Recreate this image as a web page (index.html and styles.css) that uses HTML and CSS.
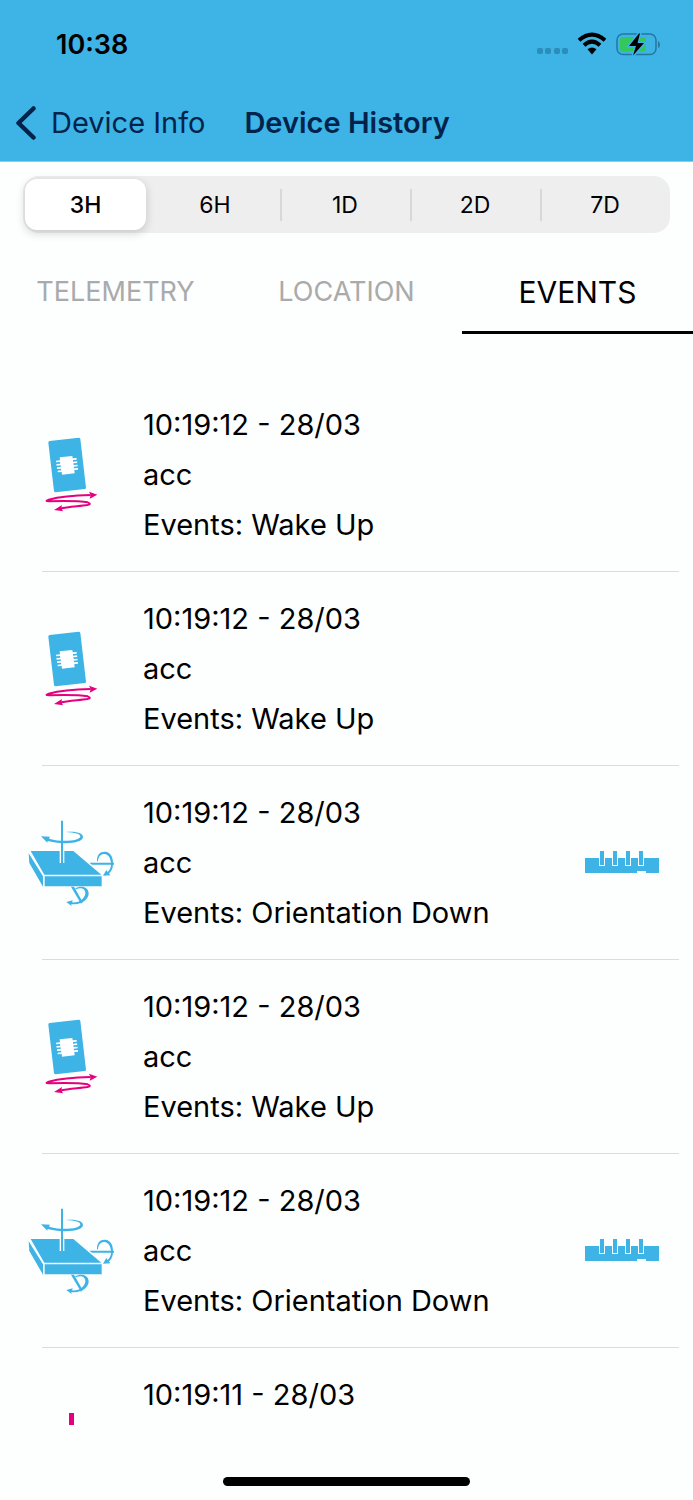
FILE: index.html
```html
<!DOCTYPE html>
<html lang="en">
<head>
<meta charset="utf-8">
<meta name="viewport" content="width=device-width, initial-scale=1">
<title>Device History</title>
<link rel="stylesheet" href="styles.css">
</head>
<body>
<svg class="sprite" aria-hidden="true">
  <symbol id="wake" viewBox="0 0 360 330">
    <g transform="translate(15 1)">
      <path d="M89 62L176 52Q180 52 181 56L198 202Q198 206 194 206L107 216Q103 216 102 212L85 67Q85 63 89 62Z" fill="#3db3e6"/>
      <path d="M119 111l38-4 1 7 12-1v5l-11 1v5l12-1 1 5-12 1 1 5 12-1v5l-12 1 1 5 12-1v5l-11 1 1 10-38 4-1-8-12 1v-5l11-1-1-5-12 1v-5l11-1v-5l-12 1-1-5 12-1-1-5-12 1v-5l12-1z" fill="#fff"/>
      <path d="M212 224C165 225 112 231 86 238Q72 243 87 243C125 242 185 243 203 246Q217 251 202 254C175 258 145 259 120 265" fill="none" stroke="#e6007e" stroke-width="6"/>
      <path d="M207 214l25 9-23 12 3-11zM126 254l-24 15 27 4-5-9z" fill="#e6007e"/>
    </g>
  </symbol>
  <symbol id="orientation" viewBox="0 0 360 330">
    <g transform="translate(0 -6)" fill="#3db3e6">
      <path d="M47 135H175L259 206H88zM41 142L84 211V242L43 171zM89 211H260V241H89z"/>
      <path d="M134 133h14v38h-14z" fill="#fff"/>
      <path d="M138 44h6v127h-6zM215 170h82v6h-66l-8-6z"/>
      <path d="M152 78C188 75 205 83 204 94C202 110 155 119 98 105l-1 5-19-19 27 1-3 6c47 13 92 4 94-6 1-9-16-12-44-14z"/>
      <path d="M246 166C245 145 257 136 270 137C288 138 295 155 294 175C293 191 287 199 282 202l4 6-22 1 10-17 4 6c7-6 11-14 10-26-1-16-8-27-20-28-10 0-18 7-19 22z"/>
      <path d="M168 242h9l26 46-5 5z"/>
      <path d="M180 248C198 237 221 243 221 263C220 280 199 298 169 294l1 6-16-12 19-5-2 6c23 2 37-11 40-26 1-15-14-20-28-13z"/>
    </g>
  </symbol>
  <symbol id="face-down" viewBox="0 0 75 24">
    <path d="M0 7H14V15H20V7H27V15H33V7H40V15H46V7H53V15H59V7H74V22H61V20H52V22H0z" fill="#3db3e6"/>
    <path d="M15 0h4v14h-4zM28 0h4v14h-4zM41 0h4v14h-4zM54 0h4v14h-4z" fill="#3db3e6"/>
  </symbol>
  <symbol id="mark" viewBox="0 0 120 110">
    <path d="M54 24h5v20h-5z" fill="#e6007e"/>
  </symbol>
</svg>
<div class="screen">
  <header class="header">
    <div class="status">
      <time class="clock">10:38</time>
      <svg class="status-icons" width="126" height="30" viewBox="0 0 126 30" aria-hidden="true">
        <g fill="#2b8db9"><rect x="1" y="14" width="6" height="6" rx="2"/><rect x="9" y="14" width="6" height="6" rx="2"/><rect x="18" y="14" width="6" height="6" rx="2"/><rect x="26" y="14" width="6" height="6" rx="2"/></g>
        <g fill="none" stroke="#000" stroke-width="4"><path d="M43 6.300Q56 -5 69 6.300"/><path d="M48 11.300Q56 4 64 11.300"/></g>
        <path d="M51.500 15.300Q56 11.500 60.500 15.300L56 20.500Z"/>
        <rect x="81" y="0" width="39" height="20.500" rx="6" fill="none" stroke="#2478a0" stroke-width="1.500"/>
        <rect x="84" y="3" width="26" height="14.500" rx="3" fill="#34c759"/>
        <path d="M122 7q2 1 2 3.500t-2 3.500z" fill="#2478a0"/>
        <path d="M103-.5L93 12H100L97 21.500L108 9H101.500L104-.5Z" stroke="#3db3e6" stroke-width="3" paint-order="stroke"/>
      </svg>
    </div>
    <nav class="navbar">
      <a class="back" href="#">
        <svg width="22" height="34" viewBox="0 0 22 34" aria-hidden="true"><path d="M18.500 2.500L3.500 17L18.500 31.500" fill="none" stroke="#03234b" stroke-width="4.500" stroke-linecap="round" stroke-linejoin="round"/></svg>
        <span>Device Info</span>
      </a>
      <h1 class="title">Device History</h1>
    </nav>
  </header>
  <div class="ranges">
    <button class="range selected" type="button">3H</button>
    <button class="range" type="button">6H</button>
    <button class="range divided" type="button">1D</button>
    <button class="range divided" type="button">2D</button>
    <button class="range divided" type="button">7D</button>
  </div>
  <div class="tabs" role="tablist">
    <button class="tab" type="button" role="tab" aria-selected="false">TELEMETRY</button>
    <button class="tab" type="button" role="tab" aria-selected="false">LOCATION</button>
    <button class="tab active" type="button" role="tab" aria-selected="true">EVENTS</button>
  </div>
  <ul class="events">
    <li class="event">
      <svg class="kind"><use href="#wake"/></svg>
      <div class="details"><p>10:19:12 - 28/03</p><p>acc</p><p>Events: Wake Up</p></div>
    </li>
    <li class="event">
      <svg class="kind"><use href="#wake"/></svg>
      <div class="details"><p>10:19:12 - 28/03</p><p>acc</p><p>Events: Wake Up</p></div>
    </li>
    <li class="event">
      <svg class="kind"><use href="#orientation"/></svg>
      <div class="details"><p>10:19:12 - 28/03</p><p>acc</p><p>Events: Orientation Down</p></div>
      <svg class="pose"><use href="#face-down"/></svg>
    </li>
    <li class="event">
      <svg class="kind"><use href="#wake"/></svg>
      <div class="details"><p>10:19:12 - 28/03</p><p>acc</p><p>Events: Wake Up</p></div>
    </li>
    <li class="event">
      <svg class="kind"><use href="#orientation"/></svg>
      <div class="details"><p>10:19:12 - 28/03</p><p>acc</p><p>Events: Orientation Down</p></div>
      <svg class="pose"><use href="#face-down"/></svg>
    </li>
    <li class="event partial">
      <svg class="kind"><use href="#mark"/></svg>
      <div class="details"><p>10:19:11 - 28/03</p></div>
    </li>
  </ul>
  <footer class="home"><div class="home-bar"></div></footer>
</div>
</body>
</html>
```
FILE: styles.css
```css
* { box-sizing: border-box; }
body {
  margin: 0;
  background: #fdfefe;
  color: #000;
  font-family: Inter, "Liberation Sans", sans-serif;
}
button { border: 0; padding: 0; background: none; color: inherit; font: inherit; }
.sprite { position: absolute; width: 0; height: 0; }
.screen { display: flex; flex-direction: column; height: 100vh; overflow: hidden; }
.header { flex: none; background: #3db3e6; border-bottom: 1px solid #a5c3d1; }
.status {
  display: flex;
  align-items: center;
  justify-content: space-between;
  height: 84px;
  padding: 5px 31px 0 56px;
}
.clock { font-size: 27px; font-weight: 600; line-height: 34px; }
.status-icons { overflow: visible; margin-top: 8px; }
.navbar {
  display: flex;
  align-items: center;
  gap: 39px;
  height: 77px;
  padding-left: 15px;
  color: #03234b;
  font-size: 29px;
  line-height: 36px;
  white-space: nowrap;
}
.back { display: flex; align-items: center; gap: 14px; color: inherit; text-decoration: none; }
.title { margin: 0; font-size: 29px; font-weight: 600; }
.ranges {
  flex: none;
  display: grid;
  grid-template-columns: 127fr repeat(4, 130fr);
  height: 57px;
  margin: 14px 23px 0;
  padding: 3px 0;
  border-radius: 16px;
  background: #eee;
}
.range {
  display: flex;
  align-items: center;
  justify-content: center;
  font-size: 23px;
  line-height: 28px;
}
.divided { justify-content: space-between; }
.divided::before,
.divided::after { content: ""; width: 2px; height: 32px; }
.divided::before { background: #d8d8d8; }
.selected {
  margin: 0 4px 0 2px;
  border-radius: 12px;
  background: #fff;
  font-weight: 500;
  box-shadow: 0 3px 8px 1px rgba(0, 0, 0, 0.14);
}
.tabs { flex: none; display: grid; grid-template-columns: repeat(3, 1fr); height: 84px; margin-top: 17px; }
.tab { padding-top: 2px; border-bottom: 3px solid transparent; color: #aaa; font-size: 27px; }
.tab.active { border-color: #000; color: #000; font-size: 30px; }
.events { flex: 1; min-height: 0; margin: 0; padding: 44px 0 0; list-style: none; overflow: hidden; }
.event {
  display: grid;
  grid-template-columns: 120px 1fr auto;
  column-gap: 8px;
  align-items: center;
  padding: 22px 33px 0 15px;
  font-size: 29px;
  line-height: 50px;
}
.event::after {
  content: "";
  grid-column: 1 / -1;
  height: 1px;
  margin: 21px -19px 0 27px;
  background: #dcdcdc;
}
.event.partial { align-items: start; }
.event.partial::after { display: none; }
.event p { margin: 0; }
.kind { width: 120px; height: 110px; }
.pose { width: 75px; height: 24px; }
.partial .kind { margin-top: 19px; }
.home { flex: none; display: flex; align-items: center; justify-content: center; height: 75px; padding-top: 37px; }
.home-bar { width: 247px; height: 9px; border-radius: 5px; background: #000; }
```
